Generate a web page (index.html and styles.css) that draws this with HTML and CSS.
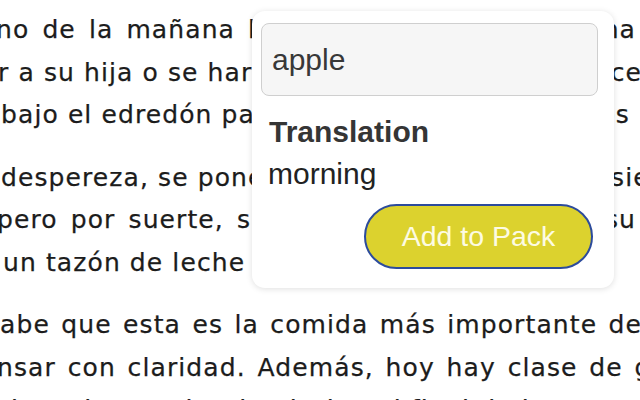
FILE: index.html
```html
<!DOCTYPE html>
<html>
<head>
    <title>Lectura</title>
    <link rel="stylesheet" href="styles.css">
</head>
<body>
    <div class="page">
        <div class="article">
            <p>
                <span class="line l1"><span>no de la mañana la</span><span class="tail">semana</span></span>
                <span class="line l2"><span>r a su hija o se hará</span><span class="tail">alcance</span></span>
                <span class="line l3"><span>bajo el edredón para</span><span class="tail">minutos</span></span>
            </p>
            <p>
                <span class="line l4"><span>despereza, se pone</span><span class="tail">siente</span></span>
                <span class="line l5"><span>pero por suerte, su</span><span class="tail">su</span></span>
                <span class="line l6"><span>un tazón de leche</span></span>
            </p>
            <p>
                <span class="line l7 full">abe que esta es la comida más importante de</span>
                <span class="line l8 full">nsar con claridad. Además, hoy hay clase de gimnasia</span>
                <span class="line l9">tica y le toca ir a la piscina al final de la</span>
            </p>
        </div>

        <div class="popup">
            <input class="word-input" type="text" value="apple">
            <div class="label">Translation</div>
            <div class="result">morning</div>
            <div class="actions">
                <button class="add-btn">Add to Pack</button>
            </div>
        </div>
    </div>
</body>
</html>
```

FILE: styles.css
```css
body {
    margin: 0;
    padding: 0;
    background-color: #fff;
    overflow: hidden;
    height: 400px;
}

.page {
    position: relative;
    width: 640px;
    height: 400px;
    overflow: hidden;
    padding-top: 9px;
    box-sizing: border-box;
}

/* texto de fondo */
.article p {
    margin: 0 0 20px 0;
    font-family: "DejaVu Sans", sans-serif;
    font-size: 25px;
    letter-spacing: 1.1px;
    line-height: 42.5px;
    color: #1c1c1c;
    -webkit-text-stroke: 0.25px #1c1c1c;
}

.line {
    display: flex;
    justify-content: space-between;
    white-space: nowrap;
    width: 640px;
    height: 42.5px;
}

.line .tail {
    flex-shrink: 0;
}

.line.full {
    display: block;
    white-space: normal;
    text-align: justify;
    text-align-last: justify;
    overflow: hidden;
}

.l1 { margin-left: -4px; width: 644px; word-spacing: 4px; }
.l1 .tail { margin-right: 4px; }
.l2 { margin-left: -2px; width: 642px; }
.l2 .tail { margin-right: -2px; }
.l3 { margin-left: 1px; width: 639px; }
.l3 .tail { margin-right: 10px; }
.l4 { margin-left: 1px; width: 639px; }
.l4 .tail { margin-right: -54px; }
.l5 { margin-left: -3px; width: 643px; word-spacing: 4px; }
.l5 .tail { margin-right: 4px; }
.l6 { margin-left: 3px; }
.l7 { width: 642px; }
.l8 { margin-left: -3px; width: 760px; }

/* popup de traduccion */
.popup {
    position: absolute;
    left: 252px;
    top: 11px;
    width: 362px;
    padding: 12px 16px 19px 9px;
    box-sizing: border-box;
    background-color: #fff;
    border-radius: 13px;
    box-shadow: 0 1px 6px rgba(0,0,0,0.13);
    font-family: "Liberation Sans", Arial, sans-serif;
}

.word-input {
    display: block;
    width: 100%;
    height: 73px;
    padding: 0 10px;
    margin: 0;
    border: 1px solid #cfcfcf;
    border-radius: 8px;
    background-color: #f6f6f6;
    box-sizing: border-box;
    font-family: "Liberation Sans", Arial, sans-serif;
    font-size: 30px;
    color: #383838;
    outline: none;
}

.label {
    margin-top: 20px;
    padding-left: 8px;
    font-size: 30px;
    font-weight: bold;
    line-height: 32px;
    color: #353535;
}

.result {
    margin-top: 9px;
    padding-left: 7px;
    font-size: 30px;
    line-height: 33px;
    color: #222;
}

.actions {
    display: flex;
    justify-content: flex-end;
    margin-top: 14px;
}

.add-btn {
    width: 229px;
    height: 65px;
    margin-right: 5px;
    border: 2px solid #2c4b9c;
    border-radius: 33px;
    background-color: #dcd22e;
    color: #fdfbe2;
    font-family: "Liberation Sans", Arial, sans-serif;
    font-size: 28.5px;
    cursor: pointer;
}
```
